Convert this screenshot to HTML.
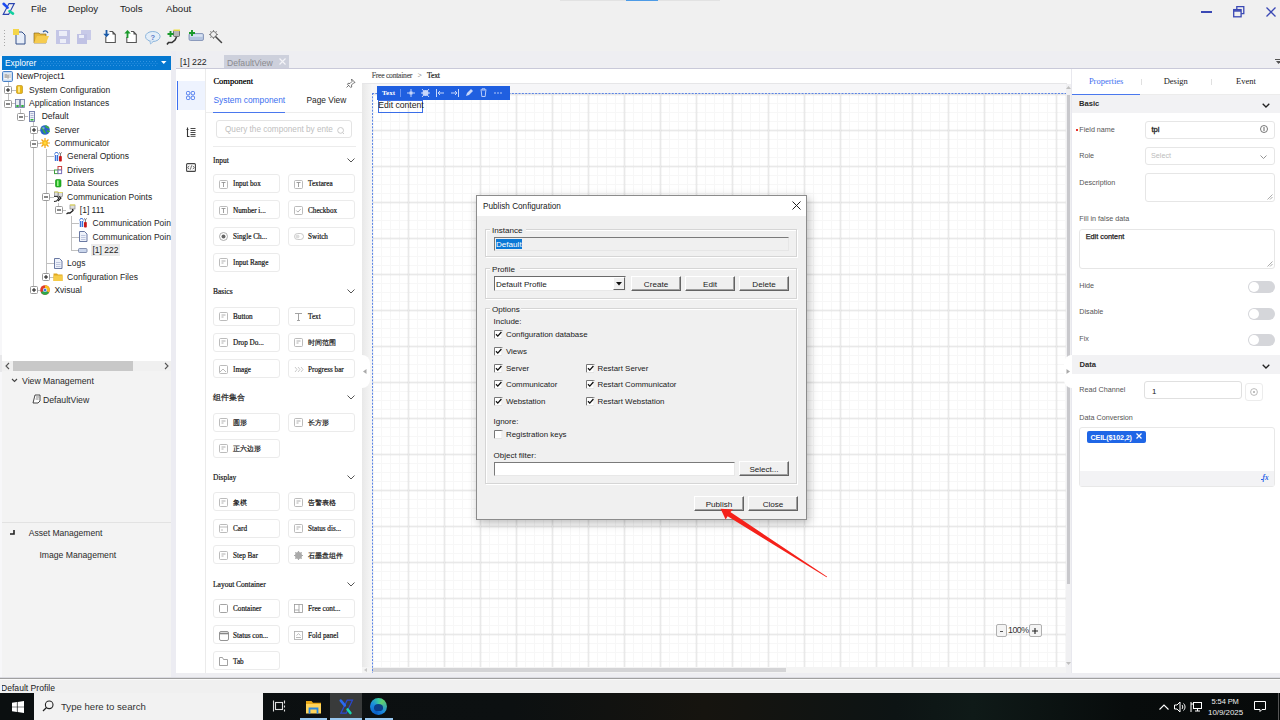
<!DOCTYPE html>
<html><head><meta charset="utf-8">
<style>
*{box-sizing:border-box;margin:0;padding:0}
html,body{width:1280px;height:720px;overflow:hidden;background:#f0f0f0;font-family:"Liberation Sans",sans-serif;color:#1e1e1e;position:relative}
.a{position:absolute}
.t{position:absolute;white-space:nowrap;line-height:1}
svg{position:absolute;overflow:visible}
</style></head><body>
<svg style="left:0px;top:0px" width="18" height="18" viewBox="0 0 18 18"><path d="M9 3.6H14.3L8.6 14.4H3.2Z" fill="none" stroke="#2a44b0" stroke-width="1.1"/><path d="M3.6 3.8L7.6 7.6" stroke="#1a4af0" stroke-width="2.6" stroke-linecap="round"/><path d="M9.5 11.2L13 13.6" stroke="#12d0a0" stroke-width="2.6" stroke-linecap="round"/></svg>
<div class="t" style="left:31px;top:4.17px;font-size:9.7px;color:#222;font-family:'Liberation Sans';font-weight:400;">File</div>
<div class="t" style="left:68px;top:4.17px;font-size:9.7px;color:#222;font-family:'Liberation Sans';font-weight:400;">Deploy</div>
<div class="t" style="left:120px;top:4.17px;font-size:9.7px;color:#222;font-family:'Liberation Sans';font-weight:400;">Tools</div>
<div class="t" style="left:166px;top:4.17px;font-size:9.7px;color:#222;font-family:'Liberation Sans';font-weight:400;">About</div>
<div class="a" style="left:560px;top:0px;width:160px;height:1px;background:#e2e2e2;"></div>
<div class="a" style="left:626px;top:0px;width:32px;height:1px;background:#4d9be6;"></div>
<div class="a" style="left:1201px;top:10.5px;width:11px;height:2.5px;background:#3a48b4;"></div>
<svg style="left:1233px;top:6px" width="12" height="12" viewBox="0 0 12 12"><path d="M3.8 3V.7h7v7H8.2" fill="none" stroke="#3a48b4" stroke-width="1.3"/><rect x=".7" y="3.6" width="7.4" height="7.2" fill="none" stroke="#3a48b4" stroke-width="1.3"/><path d=".7 4.6h7.4" stroke="#3a48b4" stroke-width="1.6"/><path d="M.7 4.9h7.4" stroke="#3a48b4" stroke-width="1.6"/></svg>
<svg style="left:1266px;top:6.5px" width="10" height="10" viewBox="0 0 10 10"><path d="M.5 .5l9 9M9.5 .5l-9 9" stroke="#3a48b4" stroke-width="1.3"/></svg>
<div class="a" style="left:4px;top:30px;width:1px;height:1px;background:#a8a8a8;"></div>
<div class="a" style="left:4px;top:33px;width:1px;height:1px;background:#a8a8a8;"></div>
<div class="a" style="left:4px;top:36px;width:1px;height:1px;background:#a8a8a8;"></div>
<div class="a" style="left:4px;top:39px;width:1px;height:1px;background:#a8a8a8;"></div>
<div class="a" style="left:4px;top:42px;width:1px;height:1px;background:#a8a8a8;"></div>
<div class="a" style="left:4px;top:45px;width:1px;height:1px;background:#a8a8a8;"></div>
<svg style="left:13px;top:29px" width="14" height="16" viewBox="0 0 14 16"><path d="M3 3h6l3 3v9H3z" fill="#e8eef8" stroke="#34518a" stroke-width="1"/><rect x="0" y="0" width="6" height="6" fill="#f4d64a"/></svg>
<svg style="left:33px;top:29px" width="17" height="16" viewBox="0 0 17 16"><path d="M1 4h5l1 1h6v9H1z" fill="#e8b838" stroke="#7a5a10" stroke-width=".6"/><path d="M1 14l3-7h12l-3 7z" fill="#f6cc50"/><path d="M10 3c2-2 4-1 5 1" fill="none" stroke="#2c5aa0" stroke-width="1.2"/></svg>
<svg style="left:56px;top:30px" width="14" height="14" viewBox="0 0 14 14"><rect x="0" y="0" width="14" height="14" fill="#c4c6e6"/><rect x="3" y="1" width="8" height="5" fill="#eceef8"/><rect x="4" y="9" width="6" height="4" fill="#eceef8"/></svg>
<svg style="left:77px;top:30px" width="14" height="14" viewBox="0 0 14 14"><rect x="4" y="0" width="10" height="10" fill="#c8cae8"/><rect x="0" y="4" width="10" height="10" fill="#c0c2e4"/><rect x="2" y="5" width="5" height="3" fill="#eceef8"/></svg>
<svg style="left:103px;top:30px" width="14" height="14" viewBox="0 0 14 14"><path d="M2.8 6.5v6h9.5V4.5L9.5 1.5H6.5" fill="#fff" stroke="#555" stroke-width="1.1"/><path d="M9.5 1.5v3h2.8z" fill="#555"/><path d="M3.5 0v5" stroke="#1a5aa8" stroke-width="1.8"/><path d="M.3 3.8L3.5 7.2 6.7 3.8z" fill="#1a5aa8"/></svg>
<svg style="left:124px;top:30px" width="14" height="14" viewBox="0 0 14 14"><path d="M2.8 7v5.5h9.5V4.5L9.5 1.5H7" fill="#fff" stroke="#555" stroke-width="1.1"/><path d="M9.5 1.5v3h2.8z" fill="#555"/><path d="M3.5 8V3" stroke="#1a9a2a" stroke-width="1.8"/><path d="M.3 3.4L3.5 0 6.7 3.4z" fill="#1a9a2a"/></svg>
<svg style="left:145px;top:31px" width="16" height="14" viewBox="0 0 16 14"><ellipse cx="7.8" cy="5.5" rx="7.3" ry="5" fill="#e4eef8" stroke="#8ab4dc" stroke-width="1"/><path d="M5 10l.5 3 3-2.6" fill="#e4eef8" stroke="#8ab4dc" stroke-width=".8"/><text x="7.8" y="8.6" font-size="7.5" font-family="Liberation Sans" font-weight="700" fill="#5a7ac8" text-anchor="middle">?</text></svg>
<svg style="left:166px;top:29px" width="16" height="17" viewBox="0 0 16 17"><path d="M1 15.5l1.5-2h3.5l3-2.5 1.5-3" fill="none" stroke="#333" stroke-width="1.6"/><rect x="7.5" y="1.5" width="6" height="6" rx="1" fill="#b8b8b8" stroke="#555" stroke-width=".8"/><path d="M7.5 1.2h6.5" stroke="#f0e040" stroke-width="1.4"/><path d="M4.5 2v6M1.5 5h6" stroke="#1a9a2a" stroke-width="1.9"/></svg>
<svg style="left:188px;top:30px" width="16" height="12" viewBox="0 0 16 12"><rect x="1" y="3.5" width="14.5" height="7" rx="1.5" fill="#b4c4e0" stroke="#7a8ab0" stroke-width=".8"/><rect x="2" y="4.3" width="12.5" height="2.5" fill="#d8e2f2"/><path d="M4 0v6M1 3h6" stroke="#1a9a2a" stroke-width="1.9"/></svg>
<svg style="left:209px;top:30px" width="14" height="14" viewBox="0 0 14 14"><path d="M6.5 6.5l6 6" stroke="#444" stroke-width="1.5" stroke-linecap="round"/><circle cx="4.5" cy="4.5" r="3" fill="none" stroke="#777" stroke-width="1"/><path d="M4.5 0v1.5M4.5 7.5V9M0 4.5h1.5M7.5 4.5H9M1.3 1.3l1 1M7.7 1.3l-1 1M1.3 7.7l1-1" stroke="#777" stroke-width=".9"/></svg>
<div class="a" style="left:0px;top:51px;width:176px;height:5px;background:#efeff2;"></div>
<div class="a" style="left:2px;top:56px;width:169px;height:14px;background:#0578d0;"></div>
<div class="t" style="left:5px;top:59.18px;font-size:8.4px;color:#ffffff;font-family:'Liberation Sans';font-weight:400;">Explorer</div>
<svg style="left:41px;top:61px" width="117" height="5" viewBox="0 0 117 5"><defs><pattern id="dp" width="3" height="4" patternUnits="userSpaceOnUse"><rect x="0" y="0" width="1" height="1" fill="#5aaaf0"/><rect x="1.5" y="2" width="1" height="1" fill="#4aa0ec"/></pattern></defs><rect x="0" y="0" width="117" height="5" fill="url(#dp)" opacity=".55"/></svg>
<svg style="left:161px;top:61.2px" width="5.5" height="3" viewBox="0 0 5.5 3"><path d="M0 0h5.5L2.75 3z" fill="#fff"/></svg>
<div class="a" style="left:0px;top:56px;width:2px;height:621px;background:#f7f7f9;"></div>
<div class="a" style="left:0px;top:355px;width:2px;height:17px;background:#e8e8ea;"></div>
<div class="a" style="left:2px;top:70px;width:169px;height:291px;background:#ffffff;"></div>
<div class="a" style="left:171px;top:51px;width:5px;height:626px;background:#ececf2;"></div>
<div class="a" style="left:8px;top:82px;width:1px;height:26px;background:#c0c0c0;"></div>
<div class="a" style="left:20px;top:109px;width:1px;height:4px;background:#c0c0c0;"></div>
<div class="a" style="left:33px;top:122px;width:1px;height:164px;background:#c0c0c0;"></div>
<div class="a" style="left:46px;top:149px;width:1px;height:128px;background:#c0c0c0;"></div>
<div class="a" style="left:58px;top:203px;width:1px;height:4px;background:#c0c0c0;"></div>
<div class="a" style="left:71px;top:216px;width:1px;height:35px;background:#c0c0c0;"></div>
<svg style="left:2px;top:71px" width="11" height="11" viewBox="0 0 11 11"><rect x=".5" y=".5" width="10" height="10" rx="1.2" fill="#c8dcf2" stroke="#4a82c8"/><rect x="2" y="2.5" width="7" height="6" fill="#f6f6f6"/><path d="M2.5 4h2.5M2.5 6h2.5M6 3.5v4M7.5 4h1M7.5 6h1" stroke="#666" stroke-width=".9"/></svg>
<div class="t" style="left:16.5px;top:72.42px;font-size:8.5px;color:#1e1e1e;font-family:'Liberation Sans';font-weight:400;">NewProject1</div>
<div class="a" style="left:12px;top:90px;width:4px;height:1px;background:#c0c0c0;"></div>
<svg style="left:16px;top:85px" width="7" height="9" viewBox="0 0 7 9"><rect x=".5" y=".5" width="6" height="8" rx="1.3" fill="#e8b818" stroke="#b88a10" stroke-width=".6"/><rect x="2" y="1.5" width="2" height="6" fill="#fbe888"/></svg>
<div class="t" style="left:29.0px;top:85.72px;font-size:8.5px;color:#1e1e1e;font-family:'Liberation Sans';font-weight:400;">System Configuration</div>
<svg style="left:4px;top:86px" width="8" height="8" viewBox="0 0 8 8"><rect x=".5" y=".5" width="7" height="7" rx="1" fill="#fff" stroke="#9a9a9a" stroke-width="1"/><path d="M2 4h4" stroke="#111" stroke-width="1"/><path d="M4 2v4" stroke="#111" stroke-width="1"/></svg>
<div class="a" style="left:12px;top:103px;width:4px;height:1px;background:#c0c0c0;"></div>
<svg style="left:15px;top:99px" width="10" height="9" viewBox="0 0 10 9"><rect x=".5" y=".5" width="4" height="8" fill="#e8ecf4" stroke="#6a78a0" stroke-width=".8"/><rect x="5.5" y=".5" width="4" height="8" fill="#e8ecf4" stroke="#6a78a0" stroke-width=".8"/><rect x="1.3" y="6" width="2.4" height="2" fill="#30b040"/><rect x="6.3" y="6" width="2.4" height="2" fill="#30b040"/></svg>
<div class="t" style="left:29.0px;top:99.12px;font-size:8.5px;color:#1e1e1e;font-family:'Liberation Sans';font-weight:400;">Application Instances</div>
<svg style="left:4px;top:100px" width="8" height="8" viewBox="0 0 8 8"><rect x=".5" y=".5" width="7" height="7" rx="1" fill="#fff" stroke="#9a9a9a" stroke-width="1"/><path d="M2 4h4" stroke="#111" stroke-width="1"/></svg>
<div class="a" style="left:24px;top:116px;width:4px;height:1px;background:#c0c0c0;"></div>
<svg style="left:29px;top:111px" width="6" height="11" viewBox="0 0 6 11"><rect x=".5" y=".5" width="5" height="10" fill="#eef0f8" stroke="#6a78a8" stroke-width=".9"/><path d="M1.5 2.5h3M1.5 4.5h3M1.5 6.5h3" stroke="#9aa6c8" stroke-width=".8"/><rect x="1.5" y="8" width="3" height="1.6" fill="#30b040"/></svg>
<div class="t" style="left:41.7px;top:112.42px;font-size:8.5px;color:#1e1e1e;font-family:'Liberation Sans';font-weight:400;">Default</div>
<svg style="left:17px;top:113px" width="8" height="8" viewBox="0 0 8 8"><rect x=".5" y=".5" width="7" height="7" rx="1" fill="#fff" stroke="#9a9a9a" stroke-width="1"/><path d="M2 4h4" stroke="#111" stroke-width="1"/></svg>
<div class="a" style="left:37px;top:130px;width:4px;height:1px;background:#c0c0c0;"></div>
<svg style="left:40px;top:125px" width="10" height="10" viewBox="0 0 10 10"><circle cx="5" cy="5" r="4.8" fill="#2a64c8"/><path d="M1.2 3.5c1.5-.5 2.5.5 2.5 2s1.5 1.5 1.5 3M5.5 .5c.5 1.5 2 2 3.5 2.5M7 6c1 0 2 .5 2.5 1" fill="none" stroke="#3cb03c" stroke-width="1.6"/><circle cx="3.5" cy="3" r="1.2" fill="#8ab8f0" opacity=".7"/></svg>
<div class="t" style="left:54.400000000000006px;top:125.83px;font-size:8.5px;color:#1e1e1e;font-family:'Liberation Sans';font-weight:400;">Server</div>
<svg style="left:30px;top:126px" width="8" height="8" viewBox="0 0 8 8"><rect x=".5" y=".5" width="7" height="7" rx="1" fill="#fff" stroke="#9a9a9a" stroke-width="1"/><path d="M2 4h4" stroke="#111" stroke-width="1"/><path d="M4 2v4" stroke="#111" stroke-width="1"/></svg>
<div class="a" style="left:37px;top:143px;width:4px;height:1px;background:#c0c0c0;"></div>
<svg style="left:40px;top:138px" width="10" height="10" viewBox="0 0 10 10"><path d="M5 0v10M0 5h10M1.5 1.5l7 7M8.5 1.5l-7 7" stroke="#f2a010" stroke-width="1.2"/><circle cx="5" cy="5" r="2.8" fill="#f8b818"/><circle cx="5" cy="5" r="1.5" fill="#ffd840"/></svg>
<div class="t" style="left:54.400000000000006px;top:139.12px;font-size:8.5px;color:#1e1e1e;font-family:'Liberation Sans';font-weight:400;">Communicator</div>
<svg style="left:30px;top:140px" width="8" height="8" viewBox="0 0 8 8"><rect x=".5" y=".5" width="7" height="7" rx="1" fill="#fff" stroke="#9a9a9a" stroke-width="1"/><path d="M2 4h4" stroke="#111" stroke-width="1"/></svg>
<div class="a" style="left:46px;top:156px;width:8px;height:1px;background:#c0c0c0;"></div>
<svg style="left:54px;top:152px" width="8" height="10" viewBox="0 0 8 10"><path d="M1.5 3v6M3.5 3v6" stroke="#3a70d8" stroke-width="1.4"/><path d="M.5 2.5l1-2h2l1 2" fill="none" stroke="#3a70d8" stroke-width=".9"/><rect x="5" y="4" width="2.8" height="5.5" rx=".8" fill="#c81818"/><path d="M6.4 4V1.5M5 .5l1.4 1 1.4-1" fill="none" stroke="#555" stroke-width=".8"/></svg>
<div class="t" style="left:67.1px;top:152.42px;font-size:8.5px;color:#1e1e1e;font-family:'Liberation Sans';font-weight:400;">General Options</div>
<div class="a" style="left:46px;top:170px;width:8px;height:1px;background:#c0c0c0;"></div>
<svg style="left:54px;top:166px" width="8" height="8" viewBox="0 0 8 8"><rect x="4" y=".5" width="3.6" height="3.6" fill="#fff" stroke="#c84040" stroke-width="1"/><rect x=".5" y="4" width="3.6" height="3.6" fill="#fff" stroke="#40a040" stroke-width="1"/><rect x="4" y="4" width="3.6" height="3.6" fill="#fff" stroke="#7a70b8" stroke-width="1"/></svg>
<div class="t" style="left:67.1px;top:165.82px;font-size:8.5px;color:#1e1e1e;font-family:'Liberation Sans';font-weight:400;">Drivers</div>
<div class="a" style="left:46px;top:183px;width:8px;height:1px;background:#c0c0c0;"></div>
<svg style="left:55px;top:179px" width="6.5" height="8.5" viewBox="0 0 6.5 8.5"><rect x=".5" y=".5" width="5.5" height="7.5" rx="1.2" fill="#22b822" stroke="#158a15" stroke-width=".6"/><rect x="2" y="1.5" width="1.6" height="5.5" fill="#a0f090"/></svg>
<div class="t" style="left:67.1px;top:179.12px;font-size:8.5px;color:#1e1e1e;font-family:'Liberation Sans';font-weight:400;">Data Sources</div>
<div class="a" style="left:50px;top:197px;width:4px;height:1px;background:#c0c0c0;"></div>
<svg style="left:53px;top:191px" width="10" height="11" viewBox="0 0 10 11"><path d="M1 5.5h3.5l1.2 2L3.5 10 1 10.5" fill="none" stroke="#222" stroke-width="1.1"/><rect x="1.5" y="1" width="3.5" height="4" fill="#ddd" stroke="#777" stroke-width=".6"/><rect x="5.5" y="1.5" width="4" height="4" fill="#ddd" stroke="#777" stroke-width=".6"/><path d="M1.5 1h3.5M5.5 1.5h4" stroke="#e8e060" stroke-width="1"/><path d="M6 5.5l2 1.5L5 10" fill="none" stroke="#222" stroke-width="1.1"/></svg>
<div class="t" style="left:67.1px;top:192.52px;font-size:8.5px;color:#1e1e1e;font-family:'Liberation Sans';font-weight:400;">Communication Points</div>
<svg style="left:42px;top:193px" width="8" height="8" viewBox="0 0 8 8"><rect x=".5" y=".5" width="7" height="7" rx="1" fill="#fff" stroke="#9a9a9a" stroke-width="1"/><path d="M2 4h4" stroke="#111" stroke-width="1"/></svg>
<div class="a" style="left:62px;top:210px;width:4px;height:1px;background:#c0c0c0;"></div>
<svg style="left:66px;top:204px" width="10" height="11" viewBox="0 0 10 11"><rect x="4" y="1" width="5" height="4" fill="#ddd" stroke="#777" stroke-width=".6"/><path d="M4 1h5" stroke="#e8e060" stroke-width="1.2"/><path d="M6.5 5l.5 1.5L4 9H2L.5 10" fill="none" stroke="#222" stroke-width="1.3"/></svg>
<div class="t" style="left:79.8px;top:205.82px;font-size:8.5px;color:#1e1e1e;font-family:'Liberation Sans';font-weight:400;">[1] 111</div>
<svg style="left:55px;top:206px" width="8" height="8" viewBox="0 0 8 8"><rect x=".5" y=".5" width="7" height="7" rx="1" fill="#fff" stroke="#9a9a9a" stroke-width="1"/><path d="M2 4h4" stroke="#111" stroke-width="1"/></svg>
<div class="a" style="left:71px;top:223px;width:8px;height:1px;background:#c0c0c0;"></div>
<svg style="left:79px;top:218px" width="8" height="10" viewBox="0 0 8 10"><path d="M1.5 3v6M3.5 3v6" stroke="#3a70d8" stroke-width="1.4"/><path d="M.5 2.5l1-2h2l1 2" fill="none" stroke="#3a70d8" stroke-width=".9"/><rect x="5" y="4" width="2.8" height="5.5" rx=".8" fill="#c81818"/><path d="M6.4 4V1.5M5 .5l1.4 1 1.4-1" fill="none" stroke="#555" stroke-width=".8"/></svg>
<div class="t" style="left:92.5px;top:219.22px;font-size:8.5px;color:#1e1e1e;font-family:'Liberation Sans';font-weight:400;">Communication Poin</div>
<div class="a" style="left:71px;top:237px;width:8px;height:1px;background:#c0c0c0;"></div>
<svg style="left:79px;top:231px" width="8.5" height="11" viewBox="0 0 8.5 11"><path d="M.5 .5h5l2.5 2.5v7.5H.5z" fill="#eef2fa" stroke="#5a6a98" stroke-width=".9"/><path d="M2 4.5h4.5M2 6.5h4.5M2 8.5h4.5" stroke="#a8b2d0" stroke-width=".7"/></svg>
<div class="t" style="left:92.5px;top:232.52px;font-size:8.5px;color:#1e1e1e;font-family:'Liberation Sans';font-weight:400;">Communication Poin</div>
<div class="a" style="left:71px;top:250px;width:8px;height:1px;background:#c0c0c0;"></div>
<svg style="left:78px;top:248px" width="9.5" height="5" viewBox="0 0 9.5 5"><rect x=".5" y=".5" width="8.5" height="4" rx="1" fill="#cad6ec" stroke="#7886a8" stroke-width=".9"/></svg>
<div class="a" style="left:91px;top:244px;width:29px;height:12px;background:#ececec;"></div>
<div class="t" style="left:92.5px;top:245.92px;font-size:8.5px;color:#1e1e1e;font-family:'Liberation Sans';font-weight:400;">[1] 222</div>
<div class="a" style="left:46px;top:263px;width:8px;height:1px;background:#c0c0c0;"></div>
<svg style="left:54px;top:258px" width="8.5" height="11" viewBox="0 0 8.5 11"><path d="M.5 .5h5l2.5 2.5v7.5H.5z" fill="#eef2fa" stroke="#5a6a98" stroke-width=".9"/><path d="M2 4.5h4.5M2 6.5h4.5M2 8.5h4.5" stroke="#a8b2d0" stroke-width=".7"/></svg>
<div class="t" style="left:67.1px;top:259.23px;font-size:8.5px;color:#1e1e1e;font-family:'Liberation Sans';font-weight:400;">Logs</div>
<div class="a" style="left:50px;top:277px;width:4px;height:1px;background:#c0c0c0;"></div>
<svg style="left:53px;top:272px" width="10" height="9" viewBox="0 0 10 9"><path d="M.5 1.5h3.5l1 1h4.5v6.5H.5z" fill="#e0a820"/><rect x=".5" y="3.5" width="9" height="5.5" fill="#f6cc48"/></svg>
<div class="t" style="left:67.1px;top:272.62px;font-size:8.5px;color:#1e1e1e;font-family:'Liberation Sans';font-weight:400;">Configuration Files</div>
<svg style="left:42px;top:273px" width="8" height="8" viewBox="0 0 8 8"><rect x=".5" y=".5" width="7" height="7" rx="1" fill="#fff" stroke="#9a9a9a" stroke-width="1"/><path d="M2 4h4" stroke="#111" stroke-width="1"/><path d="M4 2v4" stroke="#111" stroke-width="1"/></svg>
<div class="a" style="left:37px;top:290px;width:4px;height:1px;background:#c0c0c0;"></div>
<svg style="left:40px;top:285px" width="10" height="10" viewBox="0 0 10 10"><circle cx="5" cy="5" r="4.8" fill="#e03a2a"/><path d="M5 5L9.2 7.4A4.8 4.8 0 0 1 .8 7.4z" fill="#2ca84a"/><path d="M5 5L9.2 7.4A4.8 4.8 0 0 0 5 .2z" fill="#f6c020"/><circle cx="5" cy="5" r="2.1" fill="#fff"/><circle cx="5" cy="5" r="1.5" fill="#3a78e0"/></svg>
<div class="t" style="left:54.400000000000006px;top:285.93px;font-size:8.5px;color:#1e1e1e;font-family:'Liberation Sans';font-weight:400;">Xvisual</div>
<svg style="left:30px;top:286px" width="8" height="8" viewBox="0 0 8 8"><rect x=".5" y=".5" width="7" height="7" rx="1" fill="#fff" stroke="#9a9a9a" stroke-width="1"/><path d="M2 4h4" stroke="#111" stroke-width="1"/><path d="M4 2v4" stroke="#111" stroke-width="1"/></svg>
<div class="a" style="left:2px;top:361px;width:169px;height:10px;background:#f0f0f0;"></div>
<div class="a" style="left:13px;top:361px;width:120px;height:10px;background:#c8c8c8;"></div>
<svg style="left:5px;top:362px" width="5" height="8" viewBox="0 0 5 8"><path d="M4 1L1 4l3 3" fill="none" stroke="#555" stroke-width="1.1"/></svg>
<svg style="left:164px;top:362px" width="5" height="8" viewBox="0 0 5 8"><path d="M1 1l3 3-3 3" fill="none" stroke="#555" stroke-width="1.1"/></svg>
<div class="a" style="left:2px;top:371px;width:169px;height:306px;background:#f3f3f3;"></div>
<svg style="left:11px;top:378px" width="7" height="5" viewBox="0 0 7 5"><path d="M1 1l2.5 2.5L6 1" fill="none" stroke="#444" stroke-width="1.1"/></svg>
<div class="t" style="left:22px;top:377.01px;font-size:8.7px;color:#2a2a2a;font-family:'Liberation Sans';font-weight:400;">View Management</div>
<svg style="left:32px;top:394px" width="9" height="10" viewBox="0 0 9 10"><path d="M3 1h5v6l-2 2H1l2-8z" fill="#fff" stroke="#333" stroke-width=".9"/><path d="M4 3h3M3.6 5h3" stroke="#555" stroke-width=".7"/></svg>
<div class="t" style="left:43px;top:395.91px;font-size:8.7px;color:#2a2a2a;font-family:'Liberation Sans';font-weight:400;">DefaultView</div>
<div class="a" style="left:2px;top:522px;width:169px;height:1px;background:#e2e2e2;"></div>
<svg style="left:10px;top:530px" width="5" height="5" viewBox="0 0 5 5"><path d="M4 0v4H0" fill="none" stroke="#222" stroke-width="1.6"/></svg>
<div class="t" style="left:28.7px;top:529.30px;font-size:8.55px;color:#2a2a2a;font-family:'Liberation Sans';font-weight:400;">Asset Management</div>
<div class="t" style="left:39.4px;top:550.54px;font-size:8.65px;color:#2a2a2a;font-family:'Liberation Sans';font-weight:400;">Image Management</div>
<div class="a" style="left:176px;top:51px;width:1104px;height:17px;background:#eeeef2;"></div>
<div class="t" style="left:180px;top:57.72px;font-size:8.7px;color:#222;font-family:'Liberation Sans';font-weight:400;">[1] 222</div>
<div class="a" style="left:224px;top:55px;width:65px;height:13px;background:#cdd0dc;"></div>
<div class="t" style="left:227px;top:58.77px;font-size:8.6px;color:#8a8a8e;font-family:'Liberation Sans';font-weight:400;">DefaultView</div>
<svg style="left:279px;top:58px" width="7" height="7" viewBox="0 0 7 7"><path d="M.5 .5l6 6M6.5 .5l-6 6" stroke="#f4f4f8" stroke-width="1.2"/></svg>
<div class="a" style="left:1275px;top:59px;width:5px;height:1px;background:#555;"></div>
<svg style="left:1275.5px;top:61px" width="5" height="3" viewBox="0 0 5 3"><path d="M0 0h5L2.5 3z" fill="#555"/></svg>
<div class="a" style="left:176px;top:68px;width:1104px;height:1px;background:#c9c9d9;"></div>
<div class="a" style="left:176px;top:69px;width:1104px;height:608px;background:#ffffff;"></div>
<div class="a" style="left:205px;top:69px;width:1px;height:608px;background:#ebebeb;"></div>
<div class="a" style="left:177px;top:81px;width:28px;height:29px;background:#eef3fe;"></div>
<div class="a" style="left:176.5px;top:81px;width:1.5px;height:29px;background:#3d6ff0;"></div>
<svg style="left:186px;top:91px" width="9" height="9" viewBox="0 0 9 9"><g fill="none" stroke="#4a78ee" stroke-width="1"><rect x=".5" y=".5" width="3.3" height="3.3" rx="1"/><rect x="5.2" y=".5" width="3.3" height="3.3" rx="1"/><rect x=".5" y="5.2" width="3.3" height="3.3" rx="1"/><rect x="5.2" y="5.2" width="3.3" height="3.3" rx="1"/></g></svg>
<svg style="left:186px;top:127px" width="10" height="10" viewBox="0 0 10 10"><g stroke="#333" fill="none"><path d="M1.5 .5v9h2M.5 2.5h2" stroke-width="1.1"/><path d="M4.5 1.5h5M4.5 3.5h5M4.5 5.5h5M4.5 7.5h5M4.5 9.3h5" stroke-width=".9"/></g></svg>
<svg style="left:186px;top:163px" width="10" height="9" viewBox="0 0 10 9"><rect x=".6" y=".6" width="8.8" height="7.8" rx="1" fill="none" stroke="#444" stroke-width="1.1"/><path d="M3.2 2.8L1.8 4.5l1.4 1.7M6.8 2.8l1.4 1.7-1.4 1.7M5.6 2.4L4.4 6.6" fill="none" stroke="#444" stroke-width=".8"/></svg>
<div class="t" style="left:213.4px;top:77.33px;font-size:8.5px;color:#111;font-family:'Liberation Serif';font-weight:400;text-shadow:0 0 .3px #333">Component</div>
<svg style="left:345.5px;top:77.5px" width="9" height="9" viewBox="0 0 9 9"><path d="M5.5 1l3.5 3.5-1.5.5-2 2 .2 2-1 .5L1.5 6.3l.5-1 2 .2 2-2z M3 7L.5 9.5" fill="none" stroke="#666" stroke-width=".9"/></svg>
<div class="t" style="left:213.5px;top:95.88px;font-size:8.4px;color:#3d6ff0;font-family:'Liberation Sans';font-weight:400;">System component</div>
<div class="t" style="left:306.5px;top:95.91px;font-size:8.35px;color:#1e1e1e;font-family:'Liberation Sans';font-weight:400;">Page View</div>
<div class="a" style="left:206px;top:112px;width:156px;height:1px;background:#ededed;"></div>
<div class="a" style="left:213px;top:111.5px;width:72px;height:1.5px;background:#4a78ee;"></div>
<div class="a" style="left:216px;top:120px;width:136px;height:18px;border:1px solid #e4e4e4;border-radius:3px;background:#fff"></div>
<div class="t" style="left:225px;top:126.49px;font-size:8.2px;color:#c0c0c0;font-family:'Liberation Sans';font-weight:400;">Query the component by ente</div>
<svg style="left:336.5px;top:126.5px" width="8" height="8" viewBox="0 0 8 8"><circle cx="3.6" cy="3.4" r="2.9" fill="none" stroke="#c4c4c4" stroke-width=".9"/><path d="M5.6 5.6L7 7" stroke="#c4c4c4" stroke-width=".9"/></svg>
<div class="a" style="left:213px;top:146px;width:143px;height:1px;background:#ececec;"></div>
<div class="t" style="left:213px;top:156.78px;font-size:7.5px;color:#111;font-family:'Liberation Serif';font-weight:400;-webkit-text-stroke:.2px #222">Input</div>
<svg style="left:347px;top:157.5px" width="8" height="5" viewBox="0 0 8 5"><path d="M.5 .5L4 4 7.5 .5" fill="none" stroke="#555" stroke-width="1"/></svg>
<div class="a" style="left:213px;top:173.5px;width:67px;height:19px;border:1px solid #ebebeb;border-radius:3px;background:#fff"></div>
<svg style="left:219px;top:180px" width="9" height="9" viewBox="0 0 9 9"><rect x=".5" y=".5" width="8" height="8" rx="1" fill="none" stroke="#aaa" stroke-width=".8"/><path d="M2.5 2.5h4M4.5 2.5v4.5" stroke="#888" stroke-width=".8"/></svg>
<div class="t" style="left:233px;top:181.04px;font-size:7.2px;color:#111;font-family:'Liberation Serif';font-weight:400;-webkit-text-stroke:.2px #222">Input box</div>
<div class="a" style="left:288px;top:173.5px;width:67px;height:19px;border:1px solid #ebebeb;border-radius:3px;background:#fff"></div>
<svg style="left:294px;top:180px" width="9" height="9" viewBox="0 0 9 9"><rect x=".5" y=".5" width="8" height="8" rx="1" fill="none" stroke="#aaa" stroke-width=".8"/><path d="M2.5 2.5h4M4.5 2.5v4.5" stroke="#888" stroke-width=".8"/></svg>
<div class="t" style="left:308px;top:181.04px;font-size:7.2px;color:#111;font-family:'Liberation Serif';font-weight:400;-webkit-text-stroke:.2px #222">Textarea</div>
<div class="a" style="left:213px;top:200.0px;width:67px;height:19px;border:1px solid #ebebeb;border-radius:3px;background:#fff"></div>
<svg style="left:219px;top:206px" width="9" height="9" viewBox="0 0 9 9"><rect x=".5" y=".5" width="8" height="8" rx="1" fill="none" stroke="#aaa" stroke-width=".8"/><path d="M2.5 2.5h4M4.5 2.5v4.5" stroke="#888" stroke-width=".8"/></svg>
<div class="t" style="left:233px;top:207.54px;font-size:7.2px;color:#111;font-family:'Liberation Serif';font-weight:400;-webkit-text-stroke:.2px #222">Number i...</div>
<div class="a" style="left:288px;top:200.0px;width:67px;height:19px;border:1px solid #ebebeb;border-radius:3px;background:#fff"></div>
<svg style="left:294px;top:206px" width="9" height="9" viewBox="0 0 9 9"><rect x=".5" y=".5" width="8" height="8" rx="1" fill="none" stroke="#aaa" stroke-width=".8"/><path d="M2.3 4.5l1.6 1.6 2.8-3" fill="none" stroke="#999" stroke-width=".8"/></svg>
<div class="t" style="left:308px;top:207.54px;font-size:7.2px;color:#111;font-family:'Liberation Serif';font-weight:400;-webkit-text-stroke:.2px #222">Checkbox</div>
<div class="a" style="left:213px;top:226.5px;width:67px;height:19px;border:1px solid #ebebeb;border-radius:3px;background:#fff"></div>
<svg style="left:219px;top:232px" width="9" height="9" viewBox="0 0 9 9"><circle cx="4.5" cy="4.5" r="4" fill="none" stroke="#999" stroke-width=".8"/><circle cx="4.5" cy="4.5" r="2" fill="#666"/></svg>
<div class="t" style="left:233px;top:234.04px;font-size:7.2px;color:#111;font-family:'Liberation Serif';font-weight:400;-webkit-text-stroke:.2px #222">Single Ch...</div>
<div class="a" style="left:288px;top:226.5px;width:67px;height:19px;border:1px solid #ebebeb;border-radius:3px;background:#fff"></div>
<svg style="left:294px;top:232px" width="9" height="9" viewBox="0 0 9 9"><rect x=".5" y="1.5" width="9" height="6" rx="3" fill="none" stroke="#bbb" stroke-width=".8"/><circle cx="3.5" cy="4.5" r="2" fill="#ddd"/></svg>
<div class="t" style="left:308px;top:234.04px;font-size:7.2px;color:#111;font-family:'Liberation Serif';font-weight:400;-webkit-text-stroke:.2px #222">Switch</div>
<div class="a" style="left:213px;top:252.5px;width:67px;height:19px;border:1px solid #ebebeb;border-radius:3px;background:#fff"></div>
<svg style="left:219px;top:258px" width="9" height="9" viewBox="0 0 9 9"><rect x=".5" y=".5" width="8" height="8" rx="1" fill="none" stroke="#aaa" stroke-width=".8"/><path d="M2.5 3h4M2.5 5h2" stroke="#999" stroke-width=".8"/></svg>
<div class="t" style="left:233px;top:260.04px;font-size:7.2px;color:#111;font-family:'Liberation Serif';font-weight:400;-webkit-text-stroke:.2px #222">Input Range</div>
<div class="t" style="left:213px;top:288.27px;font-size:7.5px;color:#111;font-family:'Liberation Serif';font-weight:400;-webkit-text-stroke:.2px #222">Basics</div>
<svg style="left:347px;top:289px" width="8" height="5" viewBox="0 0 8 5"><path d="M.5 .5L4 4 7.5 .5" fill="none" stroke="#555" stroke-width="1"/></svg>
<div class="a" style="left:213px;top:306.5px;width:67px;height:19px;border:1px solid #ebebeb;border-radius:3px;background:#fff"></div>
<svg style="left:219px;top:312px" width="9" height="9" viewBox="0 0 9 9"><rect x=".5" y=".5" width="8" height="8" rx="1" fill="none" stroke="#aaa" stroke-width=".8"/><path d="M2.5 3h4M2.5 5h2" stroke="#999" stroke-width=".8"/></svg>
<div class="t" style="left:233px;top:314.04px;font-size:7.2px;color:#111;font-family:'Liberation Serif';font-weight:400;-webkit-text-stroke:.2px #222">Button</div>
<div class="a" style="left:288px;top:306.5px;width:67px;height:19px;border:1px solid #ebebeb;border-radius:3px;background:#fff"></div>
<svg style="left:294px;top:312px" width="9" height="9" viewBox="0 0 9 9"><path d="M1 1.5h7M4.5 1.5v7M3 8.5h3" fill="none" stroke="#999" stroke-width=".9"/></svg>
<div class="t" style="left:308px;top:314.04px;font-size:7.2px;color:#111;font-family:'Liberation Serif';font-weight:400;-webkit-text-stroke:.2px #222">Text</div>
<div class="a" style="left:213px;top:332.5px;width:67px;height:19px;border:1px solid #ebebeb;border-radius:3px;background:#fff"></div>
<svg style="left:219px;top:338px" width="9" height="9" viewBox="0 0 9 9"><rect x=".5" y=".5" width="8" height="8" rx="1" fill="none" stroke="#aaa" stroke-width=".8"/><path d="M2.5 3h4M2.5 5h2" stroke="#999" stroke-width=".8"/></svg>
<div class="t" style="left:233px;top:340.04px;font-size:7.2px;color:#111;font-family:'Liberation Serif';font-weight:400;-webkit-text-stroke:.2px #222">Drop Do...</div>
<div class="a" style="left:288px;top:332.5px;width:67px;height:19px;border:1px solid #ebebeb;border-radius:3px;background:#fff"></div>
<svg style="left:294px;top:338px" width="9" height="9" viewBox="0 0 9 9"><rect x=".5" y=".5" width="8" height="8" rx="1" fill="none" stroke="#aaa" stroke-width=".8"/><path d="M2.5 3h4M2.5 5h2" stroke="#999" stroke-width=".8"/></svg>
<div class="t" style="left:308px;top:340.04px;font-size:7.2px;color:#111;font-family:'Liberation Serif';font-weight:400;-webkit-text-stroke:.2px #222">时间范围</div>
<div class="a" style="left:213px;top:359.0px;width:67px;height:19px;border:1px solid #ebebeb;border-radius:3px;background:#fff"></div>
<svg style="left:219px;top:365px" width="9" height="9" viewBox="0 0 9 9"><rect x=".5" y=".5" width="8" height="8" rx="1" fill="none" stroke="#aaa" stroke-width=".8"/><path d="M1 7l3-3 3 3" fill="none" stroke="#aaa" stroke-width=".8"/></svg>
<div class="t" style="left:233px;top:366.54px;font-size:7.2px;color:#111;font-family:'Liberation Serif';font-weight:400;-webkit-text-stroke:.2px #222">Image</div>
<div class="a" style="left:288px;top:359.0px;width:67px;height:19px;border:1px solid #ebebeb;border-radius:3px;background:#fff"></div>
<svg style="left:294px;top:365px" width="9" height="9" viewBox="0 0 9 9"><path d="M1 2l2 2.5L1 7M4 2l2 2.5L4 7M7 2l2 2.5L7 7" fill="none" stroke="#bbb" stroke-width=".8"/></svg>
<div class="t" style="left:308px;top:366.54px;font-size:7.2px;color:#111;font-family:'Liberation Serif';font-weight:400;-webkit-text-stroke:.2px #222">Progress bar</div>
<div class="t" style="left:213px;top:394.27px;font-size:7.5px;color:#111;font-family:'Liberation Serif';font-weight:400;-webkit-text-stroke:.2px #222">组件集合</div>
<svg style="left:347px;top:395px" width="8" height="5" viewBox="0 0 8 5"><path d="M.5 .5L4 4 7.5 .5" fill="none" stroke="#555" stroke-width="1"/></svg>
<div class="a" style="left:213px;top:412.5px;width:67px;height:19px;border:1px solid #ebebeb;border-radius:3px;background:#fff"></div>
<svg style="left:219px;top:418px" width="9" height="9" viewBox="0 0 9 9"><rect x=".5" y=".5" width="8" height="8" rx="1" fill="none" stroke="#aaa" stroke-width=".8"/><path d="M2.5 3h4M2.5 5h2" stroke="#999" stroke-width=".8"/></svg>
<div class="t" style="left:233px;top:420.04px;font-size:7.2px;color:#111;font-family:'Liberation Serif';font-weight:400;-webkit-text-stroke:.2px #222">圆形</div>
<div class="a" style="left:288px;top:412.5px;width:67px;height:19px;border:1px solid #ebebeb;border-radius:3px;background:#fff"></div>
<svg style="left:294px;top:418px" width="9" height="9" viewBox="0 0 9 9"><rect x=".5" y=".5" width="8" height="8" rx="1" fill="none" stroke="#aaa" stroke-width=".8"/><path d="M2.5 3h4M2.5 5h2" stroke="#999" stroke-width=".8"/></svg>
<div class="t" style="left:308px;top:420.04px;font-size:7.2px;color:#111;font-family:'Liberation Serif';font-weight:400;-webkit-text-stroke:.2px #222">长方形</div>
<div class="a" style="left:213px;top:438.5px;width:67px;height:19px;border:1px solid #ebebeb;border-radius:3px;background:#fff"></div>
<svg style="left:219px;top:444px" width="9" height="9" viewBox="0 0 9 9"><rect x=".5" y=".5" width="8" height="8" rx="1" fill="none" stroke="#aaa" stroke-width=".8"/><path d="M2.5 3h4M2.5 5h2" stroke="#999" stroke-width=".8"/></svg>
<div class="t" style="left:233px;top:446.04px;font-size:7.2px;color:#111;font-family:'Liberation Serif';font-weight:400;-webkit-text-stroke:.2px #222">正六边形</div>
<div class="t" style="left:213px;top:474.27px;font-size:7.5px;color:#111;font-family:'Liberation Serif';font-weight:400;-webkit-text-stroke:.2px #222">Display</div>
<svg style="left:347px;top:475px" width="8" height="5" viewBox="0 0 8 5"><path d="M.5 .5L4 4 7.5 .5" fill="none" stroke="#555" stroke-width="1"/></svg>
<div class="a" style="left:213px;top:492.0px;width:67px;height:19px;border:1px solid #ebebeb;border-radius:3px;background:#fff"></div>
<svg style="left:219px;top:498px" width="9" height="9" viewBox="0 0 9 9"><rect x=".5" y=".5" width="8" height="8" rx="1" fill="none" stroke="#aaa" stroke-width=".8"/><path d="M2.5 3h4M2.5 5h2" stroke="#999" stroke-width=".8"/></svg>
<div class="t" style="left:233px;top:499.54px;font-size:7.2px;color:#111;font-family:'Liberation Serif';font-weight:400;-webkit-text-stroke:.2px #222">象棋</div>
<div class="a" style="left:288px;top:492.0px;width:67px;height:19px;border:1px solid #ebebeb;border-radius:3px;background:#fff"></div>
<svg style="left:294px;top:498px" width="9" height="9" viewBox="0 0 9 9"><rect x=".5" y=".5" width="8" height="8" rx="1" fill="none" stroke="#aaa" stroke-width=".8"/><path d="M2.5 3h4M2.5 5h2" stroke="#999" stroke-width=".8"/></svg>
<div class="t" style="left:308px;top:499.54px;font-size:7.2px;color:#111;font-family:'Liberation Serif';font-weight:400;-webkit-text-stroke:.2px #222">告警表格</div>
<div class="a" style="left:213px;top:518.5px;width:67px;height:19px;border:1px solid #ebebeb;border-radius:3px;background:#fff"></div>
<svg style="left:219px;top:524px" width="9" height="9" viewBox="0 0 9 9"><rect x=".5" y=".5" width="8" height="8" rx="1" fill="none" stroke="#aaa" stroke-width=".8"/><path d="M.5 3h8M2 6h2" stroke="#aaa" stroke-width=".8"/></svg>
<div class="t" style="left:233px;top:526.04px;font-size:7.2px;color:#111;font-family:'Liberation Serif';font-weight:400;-webkit-text-stroke:.2px #222">Card</div>
<div class="a" style="left:288px;top:518.5px;width:67px;height:19px;border:1px solid #ebebeb;border-radius:3px;background:#fff"></div>
<svg style="left:294px;top:524px" width="9" height="9" viewBox="0 0 9 9"><rect x=".5" y=".5" width="8" height="8" rx="1" fill="none" stroke="#aaa" stroke-width=".8"/><path d="M2.5 3h4M2.5 5h2" stroke="#999" stroke-width=".8"/></svg>
<div class="t" style="left:308px;top:526.04px;font-size:7.2px;color:#111;font-family:'Liberation Serif';font-weight:400;-webkit-text-stroke:.2px #222">Status dis...</div>
<div class="a" style="left:213px;top:545.0px;width:67px;height:19px;border:1px solid #ebebeb;border-radius:3px;background:#fff"></div>
<svg style="left:219px;top:551px" width="9" height="9" viewBox="0 0 9 9"><rect x=".5" y=".5" width="8" height="8" rx="1" fill="none" stroke="#aaa" stroke-width=".8"/><path d="M2.5 3h4M2.5 5h2" stroke="#999" stroke-width=".8"/></svg>
<div class="t" style="left:233px;top:552.54px;font-size:7.2px;color:#111;font-family:'Liberation Serif';font-weight:400;-webkit-text-stroke:.2px #222">Step Bar</div>
<div class="a" style="left:288px;top:545.0px;width:67px;height:19px;border:1px solid #ebebeb;border-radius:3px;background:#fff"></div>
<svg style="left:294px;top:551px" width="9" height="9" viewBox="0 0 9 9"><circle cx="4.5" cy="4.5" r="2.5" fill="none" stroke="#aaa" stroke-width="2"/><path d="M4.5 0v9M0 4.5h9M1.3 1.3l6.4 6.4M7.7 1.3L1.3 7.7" stroke="#aaa" stroke-width="1.2"/></svg>
<div class="t" style="left:308px;top:552.54px;font-size:7.2px;color:#111;font-family:'Liberation Serif';font-weight:400;-webkit-text-stroke:.2px #222">石墨盘组件</div>
<div class="t" style="left:213px;top:581.27px;font-size:7.5px;color:#111;font-family:'Liberation Serif';font-weight:400;-webkit-text-stroke:.2px #222">Layout Container</div>
<svg style="left:347px;top:582px" width="8" height="5" viewBox="0 0 8 5"><path d="M.5 .5L4 4 7.5 .5" fill="none" stroke="#555" stroke-width="1"/></svg>
<div class="a" style="left:213px;top:598.5px;width:67px;height:19px;border:1px solid #ebebeb;border-radius:3px;background:#fff"></div>
<svg style="left:219px;top:604px" width="9" height="9" viewBox="0 0 9 9"><rect x=".5" y=".5" width="8" height="8" rx="1" fill="none" stroke="#999" stroke-width=".9"/></svg>
<div class="t" style="left:233px;top:606.04px;font-size:7.2px;color:#111;font-family:'Liberation Serif';font-weight:400;-webkit-text-stroke:.2px #222">Container</div>
<div class="a" style="left:288px;top:598.5px;width:67px;height:19px;border:1px solid #ebebeb;border-radius:3px;background:#fff"></div>
<svg style="left:294px;top:604px" width="9" height="9" viewBox="0 0 9 9"><rect x=".5" y=".5" width="8" height="8" fill="none" stroke="#999" stroke-width=".8"/><path d="M5 .5v8M.5 6h4.5" stroke="#999" stroke-width=".8"/></svg>
<div class="t" style="left:308px;top:606.04px;font-size:7.2px;color:#111;font-family:'Liberation Serif';font-weight:400;-webkit-text-stroke:.2px #222">Free cont...</div>
<div class="a" style="left:213px;top:625.0px;width:67px;height:19px;border:1px solid #ebebeb;border-radius:3px;background:#fff"></div>
<svg style="left:219px;top:631px" width="9" height="9" viewBox="0 0 9 9"><rect x=".5" y=".5" width="9" height="9" rx="1.5" fill="none" stroke="#888" stroke-width=".9"/><path d="M.5 2.5h9" stroke="#888" stroke-width="1.6"/></svg>
<div class="t" style="left:233px;top:632.54px;font-size:7.2px;color:#111;font-family:'Liberation Serif';font-weight:400;-webkit-text-stroke:.2px #222">Status con...</div>
<div class="a" style="left:288px;top:625.0px;width:67px;height:19px;border:1px solid #ebebeb;border-radius:3px;background:#fff"></div>
<svg style="left:294px;top:631px" width="9" height="9" viewBox="0 0 9 9"><rect x=".5" y=".5" width="8" height="8" fill="none" stroke="#aaa" stroke-width=".8"/><path d="M2.5 4.5l2-1.8 2 1.8M2 6.5h5" fill="none" stroke="#aaa" stroke-width=".8"/></svg>
<div class="t" style="left:308px;top:632.54px;font-size:7.2px;color:#111;font-family:'Liberation Serif';font-weight:400;-webkit-text-stroke:.2px #222">Fold panel</div>
<div class="a" style="left:213px;top:651.0px;width:67px;height:19px;border:1px solid #ebebeb;border-radius:3px;background:#fff"></div>
<svg style="left:219px;top:657px" width="9" height="9" viewBox="0 0 9 9"><path d="M.5 8.5v-8h3l1 2h4v6z" fill="none" stroke="#999" stroke-width=".9"/></svg>
<div class="t" style="left:233px;top:658.54px;font-size:7.2px;color:#111;font-family:'Liberation Serif';font-weight:400;-webkit-text-stroke:.2px #222">Tab</div>
<div class="a" style="left:362px;top:69px;width:709px;height:15px;background:#ffffff;"></div>
<div class="t" style="left:371.7px;top:72.06px;font-size:7.7px;color:#555;font-family:'Liberation Serif';font-weight:400;letter-spacing:-.27px;-webkit-text-stroke:.15px #555">Free container</div>
<div class="t" style="left:417.5px;top:72.06px;font-size:7.7px;color:#666;font-family:'Liberation Serif';font-weight:400;">&gt;</div>
<div class="t" style="left:427px;top:72.06px;font-size:7.7px;color:#1e1e1e;font-family:'Liberation Serif';font-weight:400;letter-spacing:-.2px;-webkit-text-stroke:.2px #222">Text</div>
<div class="a" style="left:362px;top:84px;width:705px;height:589px;background:#f6f6f8;"></div>
<div class="a" style="left:362px;top:83px;width:705px;height:1px;background:#e6e6e8;"></div>
<div class="a" style="left:362px;top:84px;width:11px;height:589px;background:linear-gradient(90deg,#e8e8e8,#f8f8f8)"></div>
<div class="a" style="left:373px;top:94px;width:694px;height:573px;background-color:#fff;background-image:linear-gradient(90deg,rgba(0,0,0,.03) 0 1px,#e9e9e9 1px 2px,rgba(0,0,0,.03) 2px 3px,transparent 3px),linear-gradient(180deg,rgba(0,0,0,.03) 0 1px,#e9e9e9 1px 2px,rgba(0,0,0,.03) 2px 3px,transparent 3px),linear-gradient(90deg,#f7f7f7 1px,transparent 1px),linear-gradient(180deg,#f7f7f7 1px,transparent 1px);background-size:36px 36px,36px 36px,9px 9px,9px 9px;background-position:-2px -2px,-2px -1px,-1px -1px,-1px 0px"></div>
<div class="a" style="left:362px;top:667px;width:705px;height:6px;background:#f4f4f4;"></div>
<div class="a" style="left:372px;top:668px;width:414px;height:4px;background:#d4d4d6;"></div>
<svg style="left:364px;top:668px" width="3" height="4" viewBox="0 0 3 4"><path d="M3 0v4L0 2z" fill="#c8c8c8"/></svg>
<div class="a" style="left:372px;top:93px;width:695px;height:1px;background:#e4e4e8;"></div>
<svg style="left:372px;top:93px" width="695" height="1" viewBox="0 0 695 1"><path d="M0 .5H695" stroke="#5a84e6" stroke-width="1" stroke-dasharray="2 1.33"/></svg>
<svg style="left:372px;top:93px" width="1" height="580" viewBox="0 0 1 580"><path d="M.5 0V580" stroke="#5a84e6" stroke-width="1" stroke-dasharray="2 1.33"/></svg>
<div class="a" style="left:1066px;top:84px;width:5px;height:589px;background:#f0f0f2;"></div>
<div class="a" style="left:1067px;top:95px;width:3px;height:489px;background:#c8c8cc;"></div>
<svg style="left:1066px;top:86px" width="5" height="3" viewBox="0 0 5 3"><path d="M0 3L2.5 0 5 3z" fill="#c0c0c0"/></svg>
<svg style="left:1066px;top:662px" width="5" height="3" viewBox="0 0 5 3"><path d="M0 0L2.5 3 5 0z" fill="#c0c0c0"/></svg>
<div class="a" style="left:176px;top:673px;width:1104px;height:4px;background:#eeeef2;"></div>
<div class="a" style="left:0px;top:677px;width:1280px;height:1px;background:#dcdce2;"></div>
<div class="a" style="left:0px;top:678px;width:1280px;height:1px;background:#a0a0a0;"></div>
<div class="a" style="left:377px;top:86px;width:133px;height:14px;background:#1f5fe0;"></div>
<div class="t" style="left:382px;top:89.65px;font-size:7px;color:#ffffff;font-family:'Liberation Serif';font-weight:700;">Text</div>
<div class="a" style="left:400px;top:89px;width:1px;height:8px;background:#6a92ee;"></div>
<svg style="left:407px;top:89px" width="8" height="8" viewBox="0 0 8 8"><path d="M4 0v8M0 4h8" stroke="#c6d6fa" stroke-width="1"/><path d="M2.5 2.5h3v3h-3z" fill="#c6d6fa"/></svg>
<svg style="left:421px;top:88px" width="9" height="10" viewBox="0 0 9 10"><circle cx="4.5" cy="5" r="3" fill="#c6d6fa"/><path d="M1 1l7 8M8 1L1 9M0 5h9" stroke="#c6d6fa" stroke-width="1"/></svg>
<svg style="left:436px;top:89px" width="8" height="8" viewBox="0 0 8 8"><path d="M.5 0v8M2 4h6M2 4l2-2M2 4l2 2" fill="none" stroke="#c6d6fa" stroke-width="1"/></svg>
<svg style="left:451px;top:89px" width="8" height="8" viewBox="0 0 8 8"><path d="M7.5 0v8M6 4H0M6 4L4 2M6 4L4 6" fill="none" stroke="#c6d6fa" stroke-width="1"/></svg>
<svg style="left:465px;top:89px" width="8" height="8" viewBox="0 0 8 8"><path d="M1 7l1-3 4-4 2 2-4 4z" fill="#c6d6fa"/></svg>
<svg style="left:480px;top:88px" width="7" height="9" viewBox="0 0 7 9"><path d="M.5 2h6M2 2V.8h3V2M1.2 2.5l.6 6h3.4l.6-6" fill="none" stroke="#c6d6fa" stroke-width=".9"/></svg>
<svg style="left:494px;top:92px" width="8" height="2" viewBox="0 0 8 2"><circle cx="1" cy="1" r=".8" fill="#c6d6fa"/><circle cx="4" cy="1" r=".8" fill="#c6d6fa"/><circle cx="7" cy="1" r=".8" fill="#c6d6fa"/></svg>
<div class="a" style="left:378px;top:100px;width:45px;height:13px;border:1px solid #3a6ee8"></div>
<div class="t" style="left:378.3px;top:100.77px;font-size:8.6px;color:#222;font-family:'Liberation Sans';font-weight:400;">Edit content</div>
<div class="a" style="left:996px;top:624px;width:11px;height:13px;border:1px solid #b0b0b0;border-radius:2px;background:#f4f4f4"></div>
<div class="a" style="left:1000px;top:630.5px;width:3px;height:1.2px;background:#555;"></div>
<div class="t" style="left:1008px;top:626.36px;font-size:8.8px;color:#333;font-family:'Liberation Sans';font-weight:400;letter-spacing:-.5px">100%</div>
<div class="a" style="left:1028.5px;top:624px;width:13px;height:13px;border:1px solid #b0b0b0;border-radius:2px;background:#f4f4f4"></div>
<svg style="left:1032px;top:627.5px" width="6" height="6" viewBox="0 0 6 6"><path d="M3 0v6M0 3h6" stroke="#222" stroke-width="1.1"/></svg>
<div class="a" style="left:476px;top:195px;width:331px;height:325px;background:#f0f0f0;border:1px solid #8c8c8c;box-shadow:2px 3px 9px rgba(0,0,0,.28)"></div>
<div class="a" style="left:477px;top:196px;width:329px;height:20px;background:#ffffff;"></div>
<div class="t" style="left:483px;top:203.49px;font-size:8.2px;color:#1a1a1a;font-family:'Liberation Sans';font-weight:400;">Publish Configuration</div>
<svg style="left:791.5px;top:201px" width="9" height="9" viewBox="0 0 9 9"><path d="M.5 .5l8 8M8.5 .5l-8 8" stroke="#222" stroke-width="1"/></svg>
<div class="a" style="left:485px;top:229px;width:312px;height:28px;border:1px solid #d5d5d5;box-shadow:inset 1px 1px 0 #fff,1px 1px 0 #fff"></div>
<div class="a" style="left:490px;top:224px;width:36px;height:10px;background:#f0f0f0;"></div>
<div class="t" style="left:492px;top:227.04px;font-size:8.1px;color:#1a1a1a;font-family:'Liberation Sans';font-weight:400;">Instance</div>
<div class="a" style="left:494px;top:237px;width:295px;height:14px;background:#f0f0f0;border-top:1px solid #7a7a7a;border-left:1px solid #7a7a7a;border-bottom:1px solid #e6e6e6;border-right:1px solid #e6e6e6"></div>
<div class="a" style="left:496px;top:239px;width:26px;height:10px;background:#0a78d6;"></div>
<div class="t" style="left:496px;top:241.04px;font-size:8.1px;color:#ffffff;font-family:'Liberation Sans';font-weight:400;">Default</div>
<div class="a" style="left:485px;top:268px;width:312px;height:31px;border:1px solid #d5d5d5;box-shadow:inset 1px 1px 0 #fff,1px 1px 0 #fff"></div>
<div class="a" style="left:490px;top:263px;width:30px;height:10px;background:#f0f0f0;"></div>
<div class="t" style="left:492px;top:266.05px;font-size:8.1px;color:#1a1a1a;font-family:'Liberation Sans';font-weight:400;">Profile</div>
<div class="a" style="left:494px;top:276px;width:132px;height:15px;background:#fff;border-top:1px solid #6a6a6a;border-left:1px solid #6a6a6a;border-bottom:1px solid #e8e8e8;border-right:1px solid #e8e8e8"></div>
<div class="t" style="left:496px;top:281.05px;font-size:8.1px;color:#1a1a1a;font-family:'Liberation Sans';font-weight:400;">Default Profile</div>
<div class="a" style="left:613px;top:277px;width:12px;height:13px;background:#f0f0f0;border-top:1px solid #fff;border-left:1px solid #fff;border-right:1px solid #646464;border-bottom:1px solid #646464"></div>
<svg style="left:616px;top:282px" width="6" height="4" viewBox="0 0 6 4"><path d="M0 0h6L3 3.5z" fill="#111"/></svg>
<div class="a" style="left:631px;top:276px;width:50px;height:15px;background:#f0f0f0;border-top:1px solid #fff;border-left:1px solid #fff;border-right:1px solid #646464;border-bottom:1px solid #646464;box-shadow:inset -1px -1px 0 #a0a0a0"></div>
<div class="t" style="left:631px;top:280.9px;width:50px;text-align:center;font-size:8.1px;color:#1a1a1a">Create</div>
<div class="a" style="left:685px;top:276px;width:50px;height:15px;background:#f0f0f0;border-top:1px solid #fff;border-left:1px solid #fff;border-right:1px solid #646464;border-bottom:1px solid #646464;box-shadow:inset -1px -1px 0 #a0a0a0"></div>
<div class="t" style="left:685px;top:280.9px;width:50px;text-align:center;font-size:8.1px;color:#1a1a1a">Edit</div>
<div class="a" style="left:739px;top:276px;width:50px;height:15px;background:#f0f0f0;border-top:1px solid #fff;border-left:1px solid #fff;border-right:1px solid #646464;border-bottom:1px solid #646464;box-shadow:inset -1px -1px 0 #a0a0a0"></div>
<div class="t" style="left:739px;top:280.9px;width:50px;text-align:center;font-size:8.1px;color:#1a1a1a">Delete</div>
<div class="a" style="left:485px;top:308px;width:312px;height:176px;border:1px solid #d5d5d5;box-shadow:inset 1px 1px 0 #fff,1px 1px 0 #fff"></div>
<div class="a" style="left:490px;top:303px;width:31px;height:10px;background:#f0f0f0;"></div>
<div class="t" style="left:492px;top:306.05px;font-size:8.1px;color:#1a1a1a;font-family:'Liberation Sans';font-weight:400;">Options</div>
<div class="t" style="left:493.5px;top:318.30px;font-size:8px;color:#1a1a1a;font-family:'Liberation Sans';font-weight:400;">Include:</div>
<svg style="left:494px;top:330px" width="9" height="9" viewBox="0 0 9 9"><rect x="0" y="0" width="8.5" height="8.5" fill="#fff"/><path d="M.5 8.5v-8h8" fill="none" stroke="#777"/><path d="M8 .5v8H.5" fill="none" stroke="#e4e4e4"/><path d="M2 4.2l1.8 1.9 3.6-4.1" fill="none" stroke="#111" stroke-width="1.3"/></svg>
<div class="t" style="left:506px;top:331.35px;font-size:7.9px;color:#1a1a1a;font-family:'Liberation Sans';font-weight:400;">Configuration database</div>
<svg style="left:494px;top:347px" width="9" height="9" viewBox="0 0 9 9"><rect x="0" y="0" width="8.5" height="8.5" fill="#fff"/><path d="M.5 8.5v-8h8" fill="none" stroke="#777"/><path d="M8 .5v8H.5" fill="none" stroke="#e4e4e4"/><path d="M2 4.2l1.8 1.9 3.6-4.1" fill="none" stroke="#111" stroke-width="1.3"/></svg>
<div class="t" style="left:506px;top:348.05px;font-size:7.9px;color:#1a1a1a;font-family:'Liberation Sans';font-weight:400;">Views</div>
<svg style="left:494px;top:364px" width="9" height="9" viewBox="0 0 9 9"><rect x="0" y="0" width="8.5" height="8.5" fill="#fff"/><path d="M.5 8.5v-8h8" fill="none" stroke="#777"/><path d="M8 .5v8H.5" fill="none" stroke="#e4e4e4"/><path d="M2 4.2l1.8 1.9 3.6-4.1" fill="none" stroke="#111" stroke-width="1.3"/></svg>
<div class="t" style="left:506px;top:364.65px;font-size:7.9px;color:#1a1a1a;font-family:'Liberation Sans';font-weight:400;">Server</div>
<svg style="left:494px;top:380px" width="9" height="9" viewBox="0 0 9 9"><rect x="0" y="0" width="8.5" height="8.5" fill="#fff"/><path d="M.5 8.5v-8h8" fill="none" stroke="#777"/><path d="M8 .5v8H.5" fill="none" stroke="#e4e4e4"/><path d="M2 4.2l1.8 1.9 3.6-4.1" fill="none" stroke="#111" stroke-width="1.3"/></svg>
<div class="t" style="left:506px;top:381.35px;font-size:7.9px;color:#1a1a1a;font-family:'Liberation Sans';font-weight:400;">Communicator</div>
<svg style="left:494px;top:397px" width="9" height="9" viewBox="0 0 9 9"><rect x="0" y="0" width="8.5" height="8.5" fill="#fff"/><path d="M.5 8.5v-8h8" fill="none" stroke="#777"/><path d="M8 .5v8H.5" fill="none" stroke="#e4e4e4"/><path d="M2 4.2l1.8 1.9 3.6-4.1" fill="none" stroke="#111" stroke-width="1.3"/></svg>
<div class="t" style="left:506px;top:398.05px;font-size:7.9px;color:#1a1a1a;font-family:'Liberation Sans';font-weight:400;">Webstation</div>
<svg style="left:585.5px;top:364px" width="9" height="9" viewBox="0 0 9 9"><rect x="0" y="0" width="8.5" height="8.5" fill="#fff"/><path d="M.5 8.5v-8h8" fill="none" stroke="#777"/><path d="M8 .5v8H.5" fill="none" stroke="#e4e4e4"/><path d="M2 4.2l1.8 1.9 3.6-4.1" fill="none" stroke="#111" stroke-width="1.3"/></svg>
<div class="t" style="left:597.5px;top:364.65px;font-size:7.9px;color:#1a1a1a;font-family:'Liberation Sans';font-weight:400;">Restart Server</div>
<svg style="left:585.5px;top:380px" width="9" height="9" viewBox="0 0 9 9"><rect x="0" y="0" width="8.5" height="8.5" fill="#fff"/><path d="M.5 8.5v-8h8" fill="none" stroke="#777"/><path d="M8 .5v8H.5" fill="none" stroke="#e4e4e4"/><path d="M2 4.2l1.8 1.9 3.6-4.1" fill="none" stroke="#111" stroke-width="1.3"/></svg>
<div class="t" style="left:597.5px;top:381.35px;font-size:7.9px;color:#1a1a1a;font-family:'Liberation Sans';font-weight:400;">Restart Communicator</div>
<svg style="left:585.5px;top:397px" width="9" height="9" viewBox="0 0 9 9"><rect x="0" y="0" width="8.5" height="8.5" fill="#fff"/><path d="M.5 8.5v-8h8" fill="none" stroke="#777"/><path d="M8 .5v8H.5" fill="none" stroke="#e4e4e4"/><path d="M2 4.2l1.8 1.9 3.6-4.1" fill="none" stroke="#111" stroke-width="1.3"/></svg>
<div class="t" style="left:597.5px;top:398.05px;font-size:7.9px;color:#1a1a1a;font-family:'Liberation Sans';font-weight:400;">Restart Webstation</div>
<div class="t" style="left:493.5px;top:418.30px;font-size:8px;color:#1a1a1a;font-family:'Liberation Sans';font-weight:400;">Ignore:</div>
<svg style="left:494px;top:430px" width="9" height="9" viewBox="0 0 9 9"><rect x="0" y="0" width="8.5" height="8.5" fill="#fff"/><path d="M.5 8.5v-8h8" fill="none" stroke="#777"/><path d="M8 .5v8H.5" fill="none" stroke="#e4e4e4"/></svg>
<div class="t" style="left:506px;top:431.35px;font-size:7.9px;color:#1a1a1a;font-family:'Liberation Sans';font-weight:400;">Registration keys</div>
<div class="t" style="left:493.5px;top:451.80px;font-size:8px;color:#1a1a1a;font-family:'Liberation Sans';font-weight:400;">Object filter:</div>
<div class="a" style="left:494px;top:462px;width:241px;height:14px;background:#fff;border-top:1px solid #7a7a7a;border-left:1px solid #7a7a7a;border-bottom:1px solid #e8e8e8;border-right:1px solid #e8e8e8"></div>
<div class="a" style="left:739px;top:461px;width:50px;height:15px;background:#f0f0f0;border-top:1px solid #fff;border-left:1px solid #fff;border-right:1px solid #646464;border-bottom:1px solid #646464;box-shadow:inset -1px -1px 0 #a0a0a0"></div>
<div class="t" style="left:739px;top:465.9px;width:50px;text-align:center;font-size:8.1px;color:#1a1a1a">Select...</div>
<div class="a" style="left:694px;top:496px;width:50px;height:15px;background:#f0f0f0;border-top:1px solid #fff;border-left:1px solid #fff;border-right:1px solid #646464;border-bottom:1px solid #646464;box-shadow:inset -1px -1px 0 #a0a0a0"></div>
<div class="t" style="left:694px;top:500.9px;width:50px;text-align:center;font-size:8.1px;color:#1a1a1a">Publish</div>
<div class="a" style="left:748px;top:496px;width:50px;height:15px;background:#f0f0f0;border-top:1px solid #fff;border-left:1px solid #fff;border-right:1px solid #646464;border-bottom:1px solid #646464;box-shadow:inset -1px -1px 0 #a0a0a0"></div>
<div class="t" style="left:748px;top:500.9px;width:50px;text-align:center;font-size:8.1px;color:#1a1a1a">Close</div>
<svg style="left:718px;top:506px" width="112" height="74" viewBox="0 0 112 74"><path d="M2.6 2.75L15 3.4 12.35 6.05 109.2 70.7 108.6 71.2 9.65 10.25 7.6 13.4z" fill="#f5211a"/></svg>
<div class="a" style="left:1071px;top:69px;width:209px;height:604px;background:#ffffff;"></div>
<div class="a" style="left:1071px;top:69px;width:1px;height:604px;background:#e8e8ee;"></div>
<div class="t" style="left:1088.9px;top:76.83px;font-size:8.5px;color:#3d6ff0;font-family:'Liberation Serif';font-weight:400;">Properties</div>
<div class="t" style="left:1163.7px;top:76.83px;font-size:8.5px;color:#222;font-family:'Liberation Serif';font-weight:400;">Design</div>
<div class="t" style="left:1236px;top:76.83px;font-size:8.5px;color:#222;font-family:'Liberation Serif';font-weight:400;">Event</div>
<div class="a" style="left:1141px;top:79px;width:1px;height:6px;background:#e0e0e0;"></div>
<div class="a" style="left:1211px;top:79px;width:1px;height:6px;background:#e0e0e0;"></div>
<div class="a" style="left:1072px;top:94px;width:208px;height:1px;background:#ececec;"></div>
<div class="a" style="left:1072px;top:93.5px;width:68px;height:1.5px;background:#4a78ee;"></div>
<div class="a" style="left:1072px;top:95px;width:208px;height:18px;background:#f2f2f4;"></div>
<div class="t" style="left:1079px;top:100.32px;font-size:7.6px;color:#2a2a2a;font-family:'Liberation Sans';font-weight:700;">Basic</div>
<svg style="left:1262px;top:103px" width="8" height="5" viewBox="0 0 8 5"><path d="M.7 .7L4 4 7.3 .7" fill="none" stroke="#222" stroke-width="1.3"/></svg>
<div class="a" style="left:1076px;top:129px;width:1.5px;height:1.5px;background:#e83030;"></div>
<div class="t" style="left:1079.3px;top:126.04px;font-size:7.2px;color:#555;font-family:'Liberation Sans';font-weight:400;">Field name</div>
<div class="a" style="left:1145px;top:121px;width:130px;height:18px;border:1px solid #e6e6e6;border-radius:3px"></div>
<div class="t" style="left:1151.5px;top:126.32px;font-size:7.6px;color:#222;font-family:'Liberation Sans';font-weight:400;-webkit-text-stroke:.3px #222">tpl</div>
<svg style="left:1260px;top:125px" width="8" height="8" viewBox="0 0 8 8"><circle cx="4" cy="4" r="3.5" fill="none" stroke="#555" stroke-width=".8"/><path d="M4 2v4" stroke="#555" stroke-width=".9"/></svg>
<div class="t" style="left:1079.3px;top:152.04px;font-size:7.2px;color:#555;font-family:'Liberation Sans';font-weight:400;">Role</div>
<div class="a" style="left:1145px;top:147px;width:130px;height:18px;border:1px solid #e6e6e6;border-radius:3px"></div>
<div class="t" style="left:1151px;top:152.04px;font-size:7.2px;color:#bbb;font-family:'Liberation Sans';font-weight:400;">Select</div>
<svg style="left:1260px;top:155px" width="7" height="4" viewBox="0 0 7 4"><path d="M.5 .5L3.5 3.5 6.5 .5" fill="none" stroke="#888" stroke-width=".9"/></svg>
<div class="t" style="left:1079.3px;top:179.04px;font-size:7.2px;color:#555;font-family:'Liberation Sans';font-weight:400;">Description</div>
<div class="a" style="left:1145px;top:173px;width:130px;height:29px;border:1px solid #e6e6e6;border-radius:3px"></div>
<svg style="left:1267px;top:194px" width="6" height="6" viewBox="0 0 6 6"><path d="M5.5 .5l-5 5M5.5 3l-2.5 2.5" stroke="#888" stroke-width=".7"/></svg>
<div class="t" style="left:1079.3px;top:215.04px;font-size:7.2px;color:#555;font-family:'Liberation Sans';font-weight:400;">Fill in false data</div>
<div class="a" style="left:1079px;top:229px;width:196px;height:40px;border:1px solid #e6e6e6;border-radius:3px"></div>
<div class="t" style="left:1085.7px;top:233.49px;font-size:7.3px;color:#222;font-family:'Liberation Sans';font-weight:400;-webkit-text-stroke:.25px #222">Edit content</div>
<svg style="left:1267px;top:261px" width="6" height="6" viewBox="0 0 6 6"><path d="M5.5 .5l-5 5M5.5 3l-2.5 2.5" stroke="#888" stroke-width=".7"/></svg>
<div class="t" style="left:1079.3px;top:281.74px;font-size:7.2px;color:#555;font-family:'Liberation Sans';font-weight:400;">Hide</div>
<div class="a" style="left:1248px;top:281.0px;width:27px;height:12px;border-radius:6px;background:#d5d6da"></div>
<div class="a" style="left:1249px;top:282.0px;width:10px;height:10px;border-radius:5px;background:#fff"></div>
<div class="t" style="left:1079.3px;top:308.24px;font-size:7.2px;color:#555;font-family:'Liberation Sans';font-weight:400;">Disable</div>
<div class="a" style="left:1248px;top:307.5px;width:27px;height:12px;border-radius:6px;background:#d5d6da"></div>
<div class="a" style="left:1249px;top:308.5px;width:10px;height:10px;border-radius:5px;background:#fff"></div>
<div class="t" style="left:1079.3px;top:334.74px;font-size:7.2px;color:#555;font-family:'Liberation Sans';font-weight:400;">Fix</div>
<div class="a" style="left:1248px;top:334.0px;width:27px;height:12px;border-radius:6px;background:#d5d6da"></div>
<div class="a" style="left:1249px;top:335.0px;width:10px;height:10px;border-radius:5px;background:#fff"></div>
<div class="a" style="left:1072px;top:355px;width:208px;height:19px;background:#f2f2f4;"></div>
<div class="t" style="left:1079.5px;top:361.32px;font-size:7.6px;color:#2a2a2a;font-family:'Liberation Sans';font-weight:700;">Data</div>
<svg style="left:1262px;top:364px" width="8" height="5" viewBox="0 0 8 5"><path d="M.7 .7L4 4 7.3 .7" fill="none" stroke="#222" stroke-width="1.3"/></svg>
<div class="t" style="left:1079.3px;top:385.54px;font-size:7.2px;color:#555;font-family:'Liberation Sans';font-weight:400;">Read Channel</div>
<div class="a" style="left:1144px;top:381px;width:98px;height:18px;border:1px solid #e0e0e0;border-radius:3px"></div>
<div class="t" style="left:1152px;top:387.71px;font-size:7.8px;color:#222;font-family:'Liberation Sans';font-weight:400;">1</div>
<div class="a" style="left:1245px;top:383px;width:18px;height:18px;border:1px solid #ececec;border-radius:3px"></div>
<svg style="left:1250px;top:388px" width="8" height="8" viewBox="0 0 8 8"><circle cx="4" cy="4" r="3.4" fill="none" stroke="#aaa" stroke-width=".8"/><circle cx="4" cy="4" r="1" fill="#aaa"/></svg>
<div class="t" style="left:1079.3px;top:413.54px;font-size:7.2px;color:#555;font-family:'Liberation Sans';font-weight:400;">Data Conversion</div>
<div class="a" style="left:1079px;top:427px;width:196px;height:60px;border:1px solid #e8e8e8;border-radius:3px;background:#fff"></div>
<div class="a" style="left:1080px;top:471px;width:194px;height:15px;background:#f3f3f5;"></div>
<div class="a" style="left:1087px;top:430.5px;width:59px;height:12px;border-radius:2px;background:#1f66e6"></div>
<div class="t" style="left:1090.5px;top:433.54px;font-size:7.2px;color:#fff;font-family:'Liberation Sans';font-weight:700;letter-spacing:-0.15px">CEIL($102,2)</div>
<svg style="left:1136px;top:433px" width="6" height="6" viewBox="0 0 6 6"><path d="M.5 .5l5 5M5.5 .5l-5 5" stroke="#fff" stroke-width="1.2"/></svg>
<div class="t" style="left:1262.5px;top:475.04px;font-size:7.2px;color:#2a62e8;font-family:'Liberation Serif';font-weight:700;"><i>fx</i></div>
<div class="a" style="left:1261px;top:478.5px;width:2px;height:1px;background:#2a62e8;"></div>
<div class="a" style="left:362px;top:355px;width:8px;height:33px;background:#fff;border-radius:0 8px 8px 0"></div>
<svg style="left:363px;top:369px" width="4" height="5" viewBox="0 0 4 5"><path d="M3.5 0v5L0 2.5z" fill="#aaa"/></svg>
<div class="a" style="left:1064px;top:355px;width:8px;height:33px;background:#fff;border-radius:8px 0 0 8px"></div>
<svg style="left:1066px;top:369px" width="4" height="5" viewBox="0 0 4 5"><path d="M.5 0v5L4 2.5z" fill="#aaa"/></svg>
<div class="a" style="left:0px;top:679px;width:1280px;height:14px;background:#f0f0f0;"></div>
<div class="a" style="left:0px;top:679px;width:1280px;height:1px;background:#fafafa;"></div>
<div class="t" style="left:1px;top:683.57px;font-size:8.6px;color:#222;font-family:'Liberation Sans';font-weight:400;">Default Profile</div>
<div class="a" style="left:0px;top:680px;width:2px;height:12px;background:#f2f2f2;"></div>
<div class="a" style="left:0;top:693px;width:1280px;height:27px;background:linear-gradient(90deg,#0b0f10 0%,#0c1011 40%,#16140f 55%,#0d1414 70%,#0f1a18 76%,#080c0c 88%,#070a0a 100%)"></div>
<svg style="left:12px;top:701px" width="12" height="12" viewBox="0 0 12 12"><path d="M0 1.7L4.9 1v4.7H0zM5.6 .9L12 0v5.7H5.6zM0 6.3h4.9V11L0 10.3zM5.6 6.3H12V12l-6.4-.9z" fill="#fff"/></svg>
<div class="a" style="left:34px;top:693px;width:229px;height:27px;background:#f2f2f2;"></div>
<svg style="left:42px;top:700px" width="12" height="12" viewBox="0 0 12 12"><circle cx="7.2" cy="4.8" r="3.8" fill="none" stroke="#222" stroke-width="1.1"/><path d="M4.5 7.5L1 11" stroke="#222" stroke-width="1.3"/></svg>
<div class="t" style="left:61px;top:701.62px;font-size:9.6px;color:#333;font-family:'Liberation Sans';font-weight:400;">Type here to search</div>
<svg style="left:273px;top:700px" width="13" height="12" viewBox="0 0 13 12"><rect x="2.5" y="2.5" width="7" height="7" fill="none" stroke="#ddd" stroke-width="1.1"/><path d="M.5 .5v11M11.5 .5v3M11.5 5.5v2M11.5 9.5v2" stroke="#ddd" stroke-width="1.1"/></svg>
<svg style="left:306px;top:700px" width="15" height="14" viewBox="0 0 15 14"><path d="M0 1h5.5l1.5 1.8H15V13H0z" fill="#e8a818"/><rect x="0" y="4" width="15" height="9.5" fill="#ffd45a"/><path d="M3.5 13.5V8.5h8v5" fill="none" stroke="#2a88e0" stroke-width="1.8"/></svg>
<div class="a" style="left:300px;top:718px;width:27px;height:2px;background:#99c8f0;"></div>
<div class="a" style="left:330px;top:693px;width:32px;height:25px;background:#393b3b;"></div>
<svg style="left:338px;top:699px" width="16" height="16" viewBox="0 0 16 16"><path d="M9.2 1.2H14.5L8.2 14.2H2.8Z" fill="none" stroke="#2a48d0" stroke-width="1.2"/><path d="M2.8 1.6L6.8 6.4" stroke="#2a6af0" stroke-width="2.6" stroke-linecap="round"/><path d="M9.6 10.5L12.4 14" stroke="#18d8b0" stroke-width="2.6" stroke-linecap="round"/></svg>
<div class="a" style="left:330px;top:718px;width:32px;height:2px;background:#99c8f0;"></div>
<div class="a" style="left:370px;top:698px;width:17px;height:17px;border-radius:50%;background:conic-gradient(from 200deg,#0a60c8,#1a8ae0 90deg,#38c8a0 160deg,#60d070 200deg,#1a8ae0 300deg,#0a60c8)"></div>
<div class="a" style="left:374px;top:704px;width:9px;height:7px;border-radius:50% 50% 40% 40%;background:#0b3f8a"></div>
<div class="a" style="left:365px;top:718px;width:28px;height:2px;background:#99c8f0;"></div>
<svg style="left:1159px;top:704px" width="10" height="6" viewBox="0 0 10 6"><path d="M.5 5.5L5 1l4.5 4.5" fill="none" stroke="#fff" stroke-width="1.1"/></svg>
<svg style="left:1174px;top:701px" width="12" height="12" viewBox="0 0 12 12"><path d="M.5 4h2.5L6 1v10L3 8H.5z" fill="none" stroke="#fff" stroke-width="1"/><path d="M8 4c1 1 1 3 0 4M9.5 2.5c2 2 2 5 0 7" fill="none" stroke="#fff" stroke-width="1"/></svg>
<svg style="left:1190px;top:701px" width="12" height="12" viewBox="0 0 12 12"><rect x="3.5" y="1.5" width="8" height="6" fill="none" stroke="#fff" stroke-width="1"/><path d="M1 1v10M1 3h2M5 10h5M7.5 7.5v2.5" stroke="#fff" stroke-width="1"/></svg>
<div class="t" style="left:1211.5px;top:697.67px;font-size:7.5px;color:#eee;font-family:'Liberation Sans';font-weight:400;letter-spacing:-.1px">5:54 PM</div>
<div class="t" style="left:1208px;top:709.45px;font-size:7.9px;color:#eee;font-family:'Liberation Sans';font-weight:400;">10/9/2025</div>
<svg style="left:1254px;top:701px" width="12" height="11" viewBox="0 0 12 11"><path d="M.5 .5h11v8H8l-2 2v-2H.5z" fill="none" stroke="#fff" stroke-width="1"/></svg>
<div class="a" style="left:1278px;top:693px;width:1px;height:27px;background:#555;"></div>
</body></html>
